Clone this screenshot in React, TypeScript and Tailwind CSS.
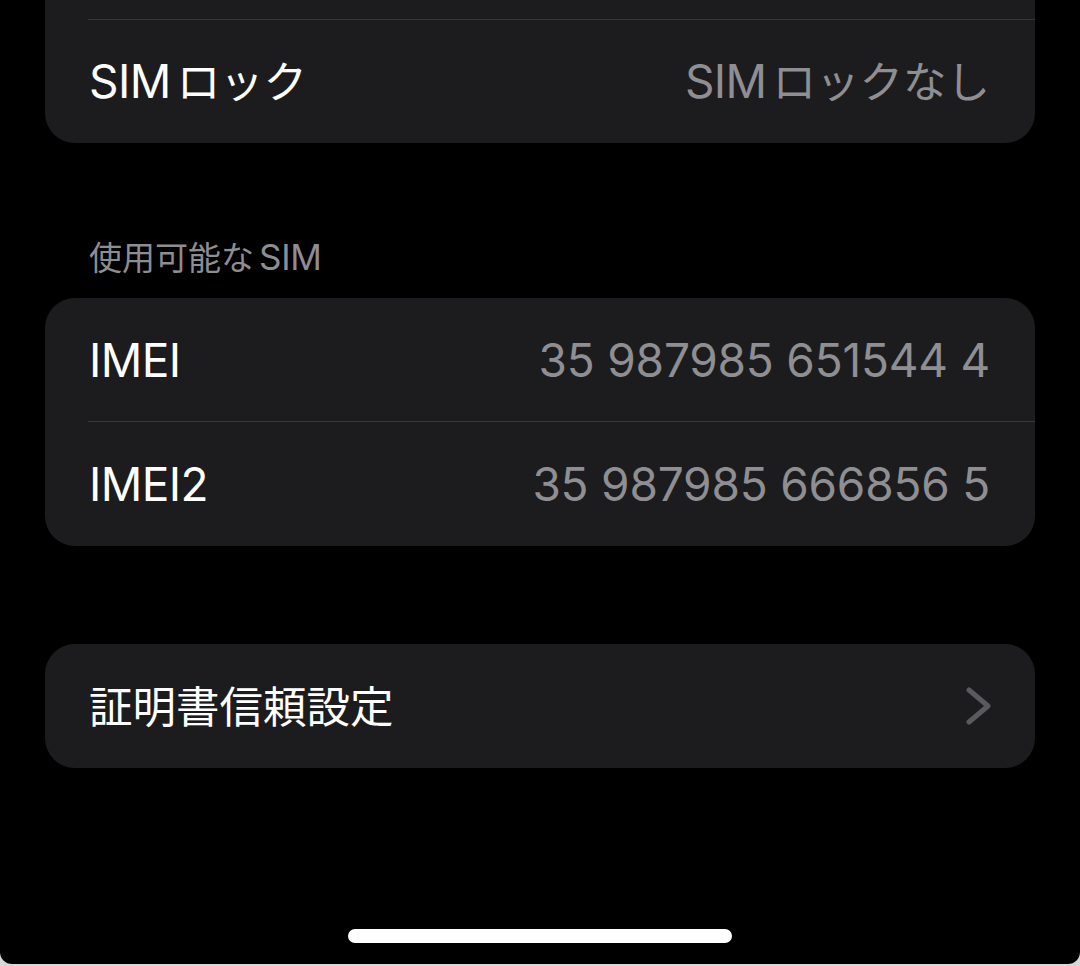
import React from "react";

const font = { fontFamily: "Inter, 'Noto Sans CJK JP', sans-serif" };

function J({ children, size = "body" }: { children: React.ReactNode; size?: "body" | "head" }) {
  return <span className={size === "body" ? "text-[43.5px] tracking-[0px]" : "text-[33px] tracking-[0px]"}>{children}</span>;
}

function Row({ label, value, last, chevron }: { label: React.ReactNode; value?: React.ReactNode; last?: boolean; chevron?: boolean }) {
  return (
    <div className="relative flex h-[124px] items-center justify-between pl-[44px] pr-[45px]">
      <span className="text-[46px] leading-[56px] tracking-[-0.6px] text-white">{label}</span>
      {value !== undefined && <span className="text-[46px] leading-[56px] tracking-[-0.2px] text-[#8e8e93]">{value}</span>}
      {chevron && (
        <svg width="26" height="38" viewBox="0 0 26 38" className="mr-[-2px]">
          <polyline points="3,3 22,19 3,35" fill="none" stroke="#5a5a5e" strokeWidth="5" strokeLinecap="round" strokeLinejoin="round" />
        </svg>
      )}
      {!last && <div className="absolute bottom-0 left-[43px] right-0 h-[1.5px] bg-[#38383a]" />}
    </div>
  );
}

export default function App() {
  return (
    <div className="h-[966px] w-[1080px] overflow-hidden bg-[#d8d8d8]" style={font}>
      <div className="flex h-[964px] flex-col rounded-b-[12px] bg-black px-[45px]">
        <div className="overflow-hidden rounded-b-[30px] bg-[#1c1c1e]">
          <div className="relative h-[20px]">
            <div className="absolute bottom-0 left-[43px] right-0 h-[1.5px] bg-[#38383a]" />
          </div>
          <div className="flex h-[123px] items-center justify-between pl-[44px] pr-[45px]">
            <span className="text-[46px] leading-[56px] tracking-[-0.6px] text-white">
              SIM<span className="ml-[6px]"><J>ロック</J></span>
            </span>
            <span className="text-[46px] leading-[56px] tracking-[-0.6px] text-[#8e8e93]">
              SIM<span className="ml-[6px]"><J>ロックなし</J></span>
            </span>
          </div>
        </div>

        <div className="flex h-[155px] items-end pb-[20px] pl-[44px]">
          <span className="text-[35px] leading-[40px] tracking-[-0.3px] text-[#8d8d92]">
            <J size="head">使用可能な</J><span className="ml-[5px]">SIM</span>
          </span>
        </div>

        <div className="overflow-hidden rounded-[30px] bg-[#1c1c1e]">
          <Row label="IMEI" value="35 987985 651544 4" />
          <Row label="IMEI2" value="35 987985 666856 5" last />
        </div>

        <div className="h-[98px]" />

        <div className="overflow-hidden rounded-[30px] bg-[#1c1c1e]">
          <Row label={<J>証明書信頼設定</J>} chevron last />
        </div>

        <div className="flex flex-1 items-start justify-center pt-[161px]">
          <div className="h-[14px] w-[384px] rounded-full bg-white" />
        </div>
      </div>
    </div>
  );
}
